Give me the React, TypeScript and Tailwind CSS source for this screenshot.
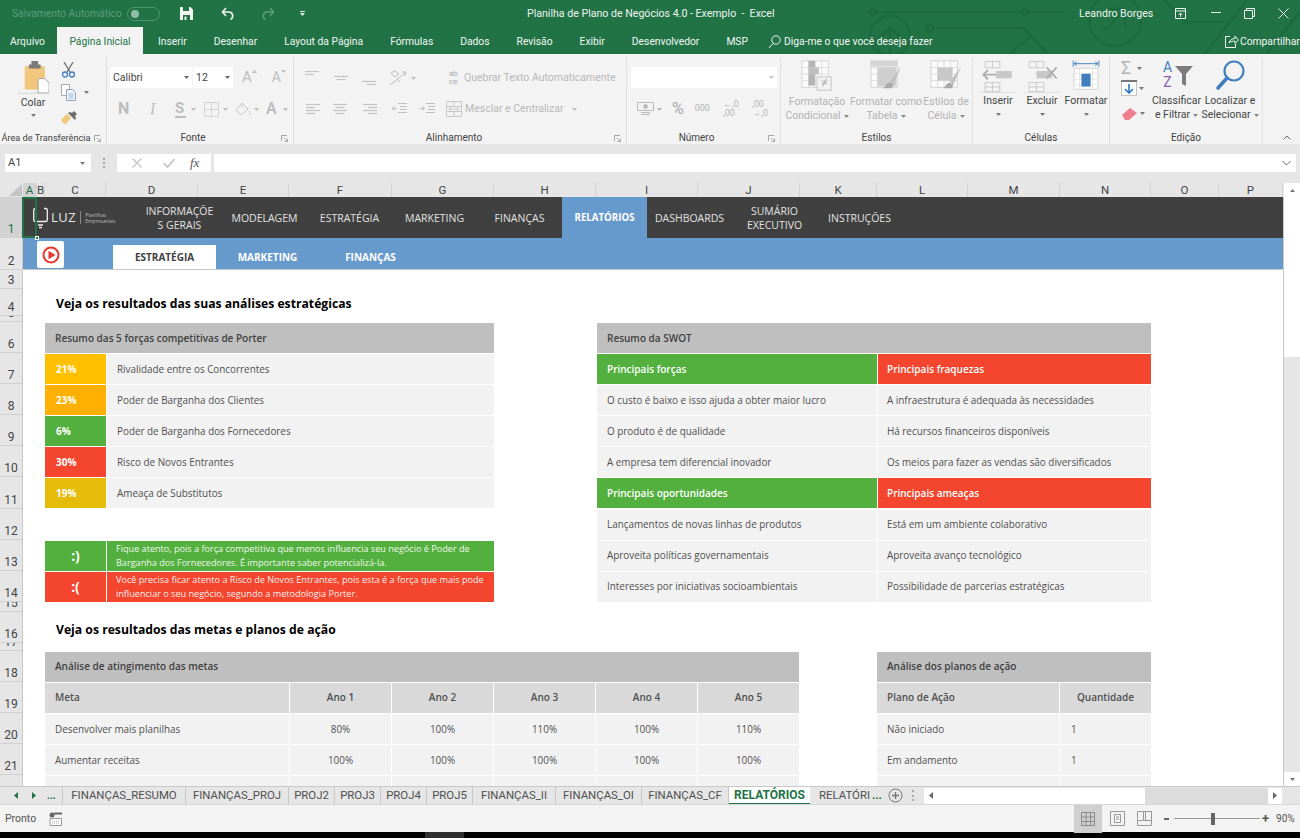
import type { ReactNode } from "react";

const ui = "font-['Roboto',sans-serif]";
const sheetFont = "font-['Open_Sans',sans-serif]";

function Caret({ className = "" }: { className?: string }) {
	return (
		<svg width="5" height="3" viewBox="0 0 5 3" className={`shrink-0 ${className}`}>
			<path d="M0 0h5L2.5 3z" fill="currentColor" />
		</svg>
	);
}

function Lines({ rows, align = "left" }: { rows: number; align?: "left" | "center" | "right" }) {
	const out = [];
	for (let i = 0; i < rows; i++) {
		const w = i % 2 === 0 ? 14 : 9;
		const x = align === "left" ? 0 : align === "center" ? (14 - w) / 2 : 14 - w;
		out.push(<path key={i} d={`M${x} ${1.5 + i * 3}h${w}`} />);
	}
	return (
		<svg width="14" height={rows * 3} stroke="#c4c4c4" strokeWidth="1.2">
			{out}
		</svg>
	);
}

function StyleIcon({ kind }: { kind: "cond" | "table" | "cell" }) {
	return (
		<svg width="34" height="34" viewBox="0 0 36 36">
			<rect x="2" y="2" width="28" height="28" fill="#fbfbfb" stroke="#d2d2d2" />
			<path d="M2 9h28M2 16h28M2 23h28M9 2v28M16 2v28M23 2v28" stroke="#dcdcdc" />
			{kind === "cond" && (
				<g>
					<rect x="9" y="2" width="7" height="7" fill="#b4b4b4" />
					<rect x="9" y="9" width="11" height="7" fill="#c0c0c0" />
					<rect x="9" y="16" width="7" height="12" fill="#b4b4b4" />
					<rect x="18" y="19" width="15" height="14" fill="#f3f3f3" stroke="#c4c4c4" />
					<path d="M23 26h6M23 23.5h6M24 29l4-8" stroke="#a8a8a8" fill="none" />
				</g>
			)}
			{kind === "table" && (
				<g>
					<rect x="2" y="2" width="28" height="6" fill="#d4d4d4" />
					<rect x="9" y="9" width="20" height="20" fill="#cfcfcf" />
				</g>
			)}
			{kind === "cell" && <rect x="9" y="9" width="16" height="14" fill="#c8c8c8" />}
			{kind !== "cond" && (
				<g>
					<path d="M34 8L22 24l4 3z" fill="#c0c0c0" />
					<path d="M21 25c-3 1-3 5-7 6h10l2-4z" fill="#a8a8a8" />
				</g>
			)}
		</svg>
	);
}

function BigLabel({ first, second, muted, width }: { first: string; second: string; muted?: boolean; width: string }) {
	return (
		<div className={`flex flex-col items-center text-[10.5px] leading-[14px] ${width} ${muted ? "text-[#b2b2b2]" : "text-[#444]"}`}>
			<span className="whitespace-nowrap">{first}</span>
			<span className="flex items-center gap-[3px] whitespace-nowrap">
				{second}
				<Caret className="text-[#888]" />
			</span>
		</div>
	);
}

function Group({
	label,
	width,
	children,
	launcher,
	labelClass = "text-[10px]",
}: {
	label: string;
	width: string;
	children: ReactNode;
	launcher?: boolean;
	labelClass?: string;
}) {
	return (
		<div className={`flex h-[87px] shrink-0 flex-col border-r border-[#e1e1e1] ${width}`}>
			<div className="relative h-[74px]">{children}</div>
			<div className={`relative flex h-[13px] items-center justify-center whitespace-nowrap text-[#444] ${labelClass}`}>
				{label}
				{launcher && (
					<svg width="7" height="7" className="absolute right-[5px] top-[4px]" stroke="#a8a8a8" fill="none">
						<path d="M.5 6V.5H6M3 3l3.5 3.5M6.5 3.5v3h-3" />
					</svg>
				)}
			</div>
		</div>
	);
}

function TitleBar() {
	return (
		<div className="flex h-[27px] items-center text-[10.6px]">
			<div className="flex w-[527px] items-center pl-[12px]">
				<span className="w-[112px] whitespace-nowrap text-[10.3px] text-[#5d9c79]">Salvamento Automático</span>
				<div className="ml-[3px] flex h-[14px] w-[33px] items-center rounded-full border border-[#4f9370] pl-[3px]">
					<div className="h-[8px] w-[8px] rounded-full bg-[#8fbda4]" />
				</div>
				<svg width="13" height="13" viewBox="0 0 13 13" className="ml-[20px]">
					<path d="M0 0h10.5L13 2.5V13H0z" fill="#f2f6f3" />
					<path d="M3 0h6v4H3z" fill="#217346" />
					<path d="M3 8h7v5H3z" fill="#217346" />
					<path d="M4.5 9.5h2v3.5h-2z" fill="#f2f6f3" />
				</svg>
				<svg width="14" height="14" viewBox="0 0 14 14" className="ml-[28px]" fill="none" stroke="#f2f6f3" strokeWidth="1.6">
					<path d="M1.5 5h7a4 4 0 0 1 1 7.5M5 1L1.5 5 5 9" />
				</svg>
				<svg width="14" height="14" viewBox="0 0 14 14" className="ml-[26px]" fill="none" stroke="#5d9c79" strokeWidth="1.6">
					<path d="M12.5 5h-7a4 4 0 0 0-1 7.5M9 1l3.5 4L9 9" />
				</svg>
				<svg width="5" height="6" viewBox="0 0 5 6" className="ml-[25px]" fill="#dfeae4">
					<path d="M0 0h5v1H0zM0 2h5L2.5 5z" />
				</svg>
			</div>
			<div className="w-[552px] whitespace-pre text-[#eef4f0]">Planilha de Plano de Negócios 4.0 - Exemplo  -  Excel</div>
			<div className="relative flex items-center text-[#eef4f0]">
				<span className="w-[96px] whitespace-nowrap">Leandro Borges</span>
				<svg width="11" height="11" viewBox="0 0 11 11" fill="none" stroke="#eef4f0">
					<path d="M.5.5h10v10H.5zM.5 3h10M5.5 9V5M3.5 7l2-2 2 2" />
				</svg>
				<svg width="10" height="2" className="ml-[25px]" fill="#eef4f0">
					<path d="M0 0h10v1H0z" />
				</svg>
				<svg width="11" height="11" viewBox="0 0 11 11" className="ml-[23px]" fill="none" stroke="#eef4f0">
					<path d="M.5 2.5h8v8h-8zM2.5 2.5v-2h8v8h-2" />
				</svg>
				<svg width="11" height="11" viewBox="0 0 11 11" className="ml-[23px]" fill="none" stroke="#eef4f0">
					<path d="M.5.5l10 10M10.5.5l-10 10" />
				</svg>
			</div>
		</div>
	);
}

function MenuBar() {
	const tabs = ["Inserir", "Desenhar", "Layout da Página", "Fórmulas", "Dados", "Revisão", "Exibir", "Desenvolvedor", "MSP"];
	return (
		<div className="flex h-[27px] items-center pt-[2px] text-[10.3px] text-[#f2f6f3]">
			<span className="ml-[10px] w-[47px]">Arquivo</span>
			<span className="-mt-[2px] flex h-[27px] w-[86px] items-center justify-center bg-[#f3f3f3] pt-[2px] text-[#217346]">Página Inicial</span>
			<div className="ml-[15px] flex gap-[27px] whitespace-nowrap">
				{tabs.map((tab) => (
					<span key={tab}>{tab}</span>
				))}
			</div>
			<svg width="13" height="14" viewBox="0 0 13 14" className="ml-[20px]" fill="none" stroke="#f2f6f3">
				<circle cx="8" cy="5" r="4.2" />
				<path d="M5 8.5L1 13" />
			</svg>
			<span className="ml-[3px] w-[441px] whitespace-nowrap">Diga-me o que você deseja fazer</span>
			<svg width="14" height="13" viewBox="0 0 14 13" fill="none" stroke="#f2f6f3">
				<path d="M5 1.5H.5v11h10V9M4 8c1-3 3-4.5 6-4.500V1l3.500 4L10 8.500V6C8 6 6 6.500 4 8z" />
			</svg>
			<span className="ml-[1px] whitespace-nowrap">Compartilhar</span>
		</div>
	);
}

function ClipboardGroup() {
	return (
		<Group label="Área de Transferência" width="w-[107px]" launcher labelClass="pr-[14px] text-[9.2px]">
			<div className="flex">
				<div className="ml-[14px] flex w-[38px] flex-col items-center">
					<svg width="31" height="34" viewBox="0 0 37 40" className="mt-[3px]">
						<path d="M8 7h24v28H8z" fill="#f1c77b" />
						<path d="M13 5h3V1h8v4h3v5H13z" fill="#7b7b7b" />
						<path d="M24 22h8l5 5v12H24z" fill="#fff" stroke="#9a9a9a" />
						<path d="M0 39.500h24" stroke="#d0d0d0" />
					</svg>
					<span className="mt-[2px] text-[10.500px] leading-[14px] text-[#444]">Colar</span>
					<Caret className="mt-[4px] text-[#777]" />
				</div>
				<div className="ml-[9px] flex flex-col">
					<svg width="15" height="16" viewBox="0 0 15 16" className="mt-[5px]" fill="none">
						<path d="M3 0l6 10M12 0L6 10" stroke="#6f6f6f" strokeWidth="1.300" />
						<circle cx="4" cy="12.500" r="2.500" stroke="#3f7fbd" strokeWidth="1.300" />
						<circle cx="11" cy="12.500" r="2.500" stroke="#3f7fbd" strokeWidth="1.300" />
					</svg>
					<div className="mt-[6px] flex items-center">
						<svg width="15" height="17" viewBox="0 0 15 17" fill="#fff" stroke="#a9a9a9">
							<path d="M.5.5h8v11h-8z" />
							<path d="M5.500 5.500h6l3 3v8h-9z" fill="#eef3f8" stroke="#8ea6bd" />
							<path d="M7.500 10h5M7.500 12h5M7.500 14h5" stroke="#9dbad6" />
						</svg>
						<Caret className="ml-[8px] text-[#777]" />
					</div>
					<svg width="16" height="14" viewBox="0 0 16 14" className="mt-[10px]">
						<path d="M0 9l6-6 4 4-5 6H3z" fill="#f1c77b" />
						<path d="M7 2l2-1 2 1 2-2 3 3-2 2 1 2-1 2z" fill="#6b6b6b" />
					</svg>
				</div>
			</div>
		</Group>
	);
}

function FontGroup() {
	const muted = "text-[#bdbdbd]";
	return (
		<Group label="Fonte" width="w-[187px]" launcher labelClass="pr-[14px] text-[10px]">
			<div className="ml-[3px] mt-[10px] flex h-[21px] items-center">
				<div className="flex h-[21px] w-[82px] items-center justify-between bg-white pl-[3px] pr-[3px] text-[10.500px] text-[#444]">
					Calibri
					<Caret className="text-[#666]" />
				</div>
				<div className="ml-[1px] flex h-[21px] w-[40px] items-center justify-between bg-white pl-[3px] pr-[3px] text-[10.500px] text-[#444]">
					12
					<Caret className="text-[#666]" />
				</div>
				<span className={`ml-[9px] text-[15px] ${muted}`}>A</span>
				<Caret className={`-mt-[12px] rotate-180 ${muted}`} />
				<span className={`ml-[15px] text-[14px] ${muted}`}>A</span>
				<Caret className={`-mt-[12px] ${muted}`} />
			</div>
			<div className={`ml-[11px] mt-[10px] flex h-[22px] items-center ${muted}`}>
				<span className="w-[12px] text-[16px] font-bold">N</span>
				<span className="ml-[20px] w-[5px] font-['Liberation_Serif',serif] text-[16px] italic">I</span>
				<span className="ml-[20px] w-[11px] border-b-2 border-[#bdbdbd] text-[15px] font-bold leading-[16px]">S</span>
				<Caret className="ml-[5px]" />
				<svg width="15" height="15" className="ml-[8px]" fill="none" stroke="#d4d4d4">
					<path d="M.5.5h14v14H.5zM7.500.5v14M.5 7.500h14" />
				</svg>
				<Caret className="ml-[4px]" />
				<svg width="16" height="15" viewBox="0 0 16 15" className="ml-[7px]" fill="none" stroke="#c8c8c8">
					<path d="M7 1L1 8l5 5 7-6zM7 1v5M14 9c1 2 1.500 3 .5 4" />
				</svg>
				<Caret className="ml-[3px]" />
				<span className="ml-[7px] w-[12px] text-[16px] font-semibold">A</span>
				<Caret className="ml-[5px]" />
			</div>
		</Group>
	);
}

function AlignGroup() {
	const text = "text-[10.500px] text-[#b8b8b8] whitespace-nowrap";
	return (
		<Group label="Alinhamento" width="w-[333px]" launcher labelClass="pr-[12px] text-[10px]">
			<div className="ml-[11px] mt-[13px] flex h-[16px]">
				<div className="self-start">
					<Lines rows={2} />
				</div>
				<div className="ml-[15px] self-center">
					<Lines rows={2} align="center" />
				</div>
				<div className="ml-[14px] self-end">
					<Lines rows={2} align="right" />
				</div>
				<svg width="20" height="16" viewBox="0 0 20 16" className="ml-[13px] self-center" fill="none" stroke="#bcbcbc">
					<path d="M1 15L16 3M13 2l4 0-1 4M2 3l4 4 4-3-4-3zM8 9l3 3" />
				</svg>
				<Caret className="ml-[2px] self-center text-[#bdbdbd]" />
				<div className="ml-[33px] flex w-[12px] flex-col text-[8px] leading-[8px] text-[#a8a8a8]">
					<span>ab</span>
					<span>ce</span>
				</div>
				<span className={`ml-[3px] self-center ${text}`}>Quebrar Texto Automaticamente</span>
			</div>
			<div className="ml-[12px] mt-[14px] flex h-[18px] items-center">
				<Lines rows={4} />
				<div className="ml-[13px]">
					<Lines rows={4} align="center" />
				</div>
				<div className="ml-[16px]">
					<Lines rows={4} align="right" />
				</div>
				<svg width="16" height="12" viewBox="0 0 16 12" className="ml-[14px]" fill="none" stroke="#c0c0c0">
					<path d="M7 .5h9M9 3.500h7M9 6.500h7M7 9.500h9M6 5.500H1M3.500 3L1 5.500 3.500 8" />
				</svg>
				<svg width="16" height="12" viewBox="0 0 16 12" className="ml-[12px]" fill="none" stroke="#c0c0c0">
					<path d="M7 .5h9M9 3.500h7M9 6.500h7M7 9.500h9M0 5.500h5M3 3l2.500 2.500L3 8" />
				</svg>
				<svg width="16" height="16" viewBox="0 0 16 16" className="ml-[11px]" fill="none" stroke="#c8c8c8">
					<path d="M.5.500h15v15H.5zM.5 5.500h15M.5 10.500h15M8 .5v5M8 10.500v5M3 8h10M3 8l2-1.500M3 8l2 1.500M13 8l-2-1.500M13 8l-2 1.500" />
				</svg>
				<span className={`ml-[3px] w-[107px] ${text}`}>Mesclar e Centralizar</span>
				<Caret className="text-[#bdbdbd]" />
			</div>
		</Group>
	);
}

function NumberGroup() {
	return (
		<Group label="Número" width="w-[154px]" launcher labelClass="pr-[14px] text-[10px]">
			<div className="ml-[4px] mt-[10px] flex h-[21px] w-[146px] items-center justify-end bg-white pr-[3px] text-[#c4c4c4]">
				<Caret />
			</div>
			<div className="ml-[10px] mt-[10px] flex h-[22px] items-center text-[#b4b4b4]">
				<svg width="17" height="16" viewBox="0 0 17 16" fill="none" stroke="#bcbcbc">
					<path d="M.5 1.500h16v8H.5z" />
					<circle cx="8.500" cy="5.500" r="2" fill="#bcbcbc" />
					<path d="M4 11.500h9M4 13.500h9" />
				</svg>
				<Caret className="ml-[3px]" />
				<span className="ml-[10px] text-[16px] text-[#a8a8a8]">%</span>
				<span className="ml-[11px] text-[9px]">000</span>
				<div className="ml-[13px] flex w-[20px] flex-col text-[9px] leading-[9px]">
					<span>←,0</span>
					<span>,00</span>
				</div>
				<div className="ml-[9px] flex w-[20px] flex-col text-[9px] leading-[9px]">
					<span>,00</span>
					<span>→,0</span>
				</div>
			</div>
		</Group>
	);
}

function StylesGroup() {
	return (
		<Group label="Estilos" width="w-[192px]">
			<div className="flex pt-[2px]">
				<div className="flex w-[72px] flex-col items-center">
					<StyleIcon kind="cond" />
					<div className="mt-[2px]">
						<BigLabel first="Formatação" second="Condicional" muted width="w-[72px]" />
					</div>
				</div>
				<div className="flex w-[66px] flex-col items-center">
					<StyleIcon kind="table" />
					<div className="mt-[2px]">
						<BigLabel first="Formatar como" second="Tabela" muted width="w-[66px]" />
					</div>
				</div>
				<div className="flex w-[54px] flex-col items-center">
					<StyleIcon kind="cell" />
					<div className="mt-[2px]">
						<BigLabel first="Estilos de" second="Célula" muted width="w-[54px]" />
					</div>
				</div>
			</div>
		</Group>
	);
}

function CellBlocks({ x }: { x?: boolean }) {
	return (
		<svg width="38" height="33" viewBox="0 0 38 36" fill="none">
			<path d="M5 1.500h16v7H5zM13 1.500v7M5 24.500h16v10H5zM5 29.500h16M13 24.500v10" stroke="#c8c8c8" />
			<rect x={x ? 13 : 17} y="12" width="17" height="8" fill="#c8c8c8" />
			{x ? (
				<path d="M24 8l11 12M35 8L24 20" stroke="#aeaeae" strokeWidth="2" />
			) : (
				<path d="M17 16H3M8 11l-5 5 5 5" stroke="#aeaeae" strokeWidth="2" />
			)}
			<path d="M0 35.500h38" stroke="#dedede" />
		</svg>
	);
}

function CellsGroup() {
	return (
		<Group label="Células" width="w-[137px]">
			<div className="flex pt-[3px]">
				<div className="ml-[5px] flex w-[40px] flex-col items-center text-[10.500px] text-[#444]">
					<CellBlocks />
					<span className="mt-[1px] leading-[14px]">Inserir</span>
					<Caret className="mt-[5px] text-[#777]" />
				</div>
				<div className="ml-[3px] flex w-[42px] flex-col items-center text-[10.500px] text-[#444]">
					<CellBlocks x />
					<span className="mt-[1px] leading-[14px]">Excluir</span>
					<Caret className="mt-[5px] text-[#777]" />
				</div>
				<div className="ml-[1px] flex w-[44px] flex-col items-center text-[10.500px] text-[#444]">
					<svg width="30" height="33" viewBox="0 0 30 36" fill="none">
						<path d="M2 4h26M2 4l3-2M2 4l3 2M28 4l-3-2M28 4l-3 2M1 .5v7M29 .5v7" stroke="#3f7fbd" />
						<path d="M2 9h26v23H2z" fill="#fff" stroke="#d0d0d0" />
						<path d="M2 15h26M2 21h26M2 27h26M8 9v23M22 9v23" stroke="#e2e2e2" />
						<rect x="10" y="15" width="10" height="14" fill="#3f7fbd" />
					</svg>
					<span className="mt-[1px] leading-[14px]">Formatar</span>
					<Caret className="mt-[5px] text-[#777]" />
				</div>
			</div>
		</Group>
	);
}

function EditGroup() {
	return (
		<Group label="Edição" width="w-[153px]">
			<div className="flex pt-[3px]">
				<div className="-mt-[2px] ml-[11px] flex w-[28px] flex-col">
					<div className="flex h-[20px] items-center">
						<span className="text-[18px] leading-[18px] text-[#b6b6b6]">Σ</span>
						<Caret className="ml-[6px] text-[#777]" />
					</div>
					<div className="flex h-[20px] items-center">
						<svg width="16" height="16" viewBox="0 0 16 16">
							<rect x=".5" y=".5" width="15" height="15" fill="#fff" stroke="#c4c4c4" />
							<path d="M0 0h16v2H0z" fill="#777" />
							<path d="M8 4v9M4 9l4 4 4-4" stroke="#2b79c2" strokeWidth="1.600" fill="none" />
						</svg>
						<Caret className="ml-[2px] text-[#777]" />
					</div>
					<div className="mt-[7px] flex h-[16px] items-center">
						<svg width="17" height="13" viewBox="0 0 17 13">
							<path d="M1 8l8-7 7 5-8 7H4z" fill="#ee7f8f" />
						</svg>
						<Caret className="ml-[2px] text-[#777]" />
					</div>
				</div>
				<div className="flex w-[55px] flex-col items-center">
					<div className="flex h-[31px] items-start">
						<div className="flex w-[14px] flex-col items-center text-[14px] leading-[15px]">
							<span className="text-[#3f7fbd]">A</span>
							<span className="text-[#8a5cb0]">Z</span>
						</div>
						<svg width="18" height="22" viewBox="0 0 18 22" className="mt-[6px]">
							<path d="M0 0h18l-7 8v12l-4-2V8z" fill="#7c7c7c" />
						</svg>
					</div>
					<div className="mt-[3px]">
						<BigLabel first="Classificar" second="e Filtrar" width="w-[55px]" />
					</div>
				</div>
				<div className="flex w-[52px] flex-col items-center">
					<svg width="30" height="31" viewBox="0 0 30 31" fill="none" stroke="#3f7fbd">
						<circle cx="19" cy="11" r="9.500" strokeWidth="2.200" />
						<path d="M12 18L3 28" strokeWidth="3.600" strokeLinecap="round" />
					</svg>
					<div className="mt-[3px]">
						<BigLabel first="Localizar e" second="Selecionar" width="w-[52px]" />
					</div>
				</div>
			</div>
		</Group>
	);
}

function Ribbon() {
	return (
		<div className={`flex h-[90px] bg-[#f3f3f3] pt-[3px] ${ui}`}>
			<ClipboardGroup />
			<FontGroup />
			<AlignGroup />
			<NumberGroup />
			<StylesGroup />
			<CellsGroup />
			<EditGroup />
			<div className="flex flex-1 items-end justify-end pb-[4px] pr-[9px]">
				<svg width="8" height="5" fill="none" stroke="#666">
					<path d="M.5 4.500L4 1l3.500 3.500" />
				</svg>
			</div>
		</div>
	);
}

function FormulaBar() {
	return (
		<div className={`flex h-[39px] items-start bg-[#e6e6e6] pl-[5px] pt-[10px] ${ui}`}>
			<div className="flex h-[18px] w-[86px] items-center justify-between bg-white pl-[3px] pr-[6px] text-[11px] text-[#444]">
				A1
				<Caret className="text-[#777]" />
			</div>
			<div className="ml-[12px] flex h-[18px] w-[4px] flex-col justify-center gap-[2px]">
				<div className="h-[2px] w-[2px] bg-[#a8a8a8]" />
				<div className="h-[2px] w-[2px] bg-[#a8a8a8]" />
				<div className="h-[2px] w-[2px] bg-[#a8a8a8]" />
			</div>
			<div className="ml-[10px] flex h-[18px] w-[94px] items-center bg-white pl-[15px]">
				<svg width="10" height="10" fill="none" stroke="#c4c4c4" strokeWidth="1.300">
					<path d="M.5.500l9 9M9.500.500l-9 9" />
				</svg>
				<svg width="12" height="10" className="ml-[21px]" fill="none" stroke="#c4c4c4" strokeWidth="1.600">
					<path d="M.5 5l4 4L11.500 1" />
				</svg>
				<span className="ml-[15px] font-['Liberation_Serif',serif] text-[13px] italic text-[#555]">fx</span>
			</div>
			<div className="ml-[3px] flex h-[18px] flex-1 items-center justify-end bg-white pr-[5px]">
				<svg width="9" height="6" fill="none" stroke="#666">
					<path d="M.5 1L4.500 5l4-4" />
				</svg>
			</div>
			<div className="w-[4px]" />
		</div>
	);
}

const columns: [string, string][] = [
	["A", "w-[14px]"],
	["B", "w-[8px]"],
	["C", "w-[61px]"],
	["D", "w-[92px]"],
	["E", "w-[91px]"],
	["F", "w-[103px]"],
	["G", "w-[102px]"],
	["H", "w-[102px]"],
	["I", "w-[102px]"],
	["J", "w-[102px]"],
	["K", "w-[77px]"],
	["L", "w-[91px]"],
	["M", "w-[92px]"],
	["N", "w-[91px]"],
	["O", "w-[68px]"],
	["P", "w-[64px]"],
];

function ColumnHeaders() {
	return (
		<div className={`flex h-[14px] bg-[#e6e6e6] text-[11.5px] leading-[14px] text-[#444] ${ui}`}>
			<div className="flex h-[14px] w-[23px] items-end justify-end pb-[1px] pr-[1px]">
				<svg width="13" height="12" fill="#c4c4c4">
					<path d="M13 0v12H0z" />
				</svg>
			</div>
			{columns.map(([name, width]) => (
				<div
					key={name}
					className={`h-[14px] border-r border-[#d4d4d4] text-center ${width} ${name === "A" ? "bg-[#d2d2d2] text-[#217346]" : ""}`}
				>
					{name}
				</div>
			))}
			<div className="ml-px flex h-[14px] w-[16px] items-center justify-center bg-white text-[#777]">
				<Caret className="rotate-180" />
			</div>
		</div>
	);
}

const rowHeaders: [string, string][] = [
	["1", "h-[41px]"],
	["2", "h-[32px]"],
	["3", "h-[19px]"],
	["4", "h-[27px]"],
	["5", "h-[6px]"],
	["6", "h-[31px]"],
	["7", "h-[31px]"],
	["8", "h-[31px]"],
	["9", "h-[31px]"],
	["10", "h-[31px]"],
	["11", "h-[32px]"],
	["12", "h-[31px]"],
	["13", "h-[31px]"],
	["14", "h-[31px]"],
	["15", "h-[10px]"],
	["16", "h-[31px]"],
	["17", "h-[8px]"],
	["18", "h-[31px]"],
	["19", "h-[31px]"],
	["20", "h-[31px]"],
	["21", "h-[31px]"],
	["22", "h-[31px]"],
];

function RowHeaders() {
	return (
		<div className={`w-[23px] shrink-0 overflow-hidden border-r border-[#c8c8c8] bg-[#e6e6e6] text-[12px] text-[#444] ${ui}`}>
			{rowHeaders.map(([label, height]) => (
				<div
					key={label}
					className={`flex items-end justify-center overflow-hidden border-b border-[#d0d0d0] leading-[15px] ${height} ${label === "1" ? "bg-[#d2d2d2] text-[#217346]" : ""}`}
				>
					<span className="shrink-0">{label}</span>
				</div>
			))}
		</div>
	);
}

function Logo() {
	return (
		<div className="ml-[10px] flex w-[104px] items-center text-[#e8e8e8]">
			<svg width="15" height="22" viewBox="0 0 15 22" fill="none" stroke="#f0f0f0" strokeWidth="1.300">
				<path d="M4 1.500H2A1.500 1.500 0 0 0 .7 3v10A1.500 1.500 0 0 0 2 14.500h11A1.500 1.500 0 0 0 14.300 13V3A1.500 1.500 0 0 0 13 1.500h-2" />
				<path d="M5 18h5M6 20.500h3" />
			</svg>
			<span className="ml-[3px] text-[13px] font-medium tracking-[0.5px]">LUZ</span>
			<div className="mx-[4px] h-[13px] w-px bg-[#8a8a8a]" />
			<div className="flex flex-col text-[5px] leading-[6px] text-[#b8b8b8]">
				<span>Planilhas</span>
				<span>Empresariais</span>
			</div>
		</div>
	);
}

function TopNav() {
	const items = [
		["INFORMAÇÕE", "S GERAIS"],
		["MODELAGEM"],
		["ESTRATÉGIA"],
		["MARKETING"],
		["FINANÇAS"],
		["RELATÓRIOS"],
		["DASHBOARDS"],
		["SUMÁRIO", "EXECUTIVO"],
		["INSTRUÇÕES"],
	];
	return (
		<div className="flex h-[41px] shrink-0 bg-[#404040]">
			<Logo />
			{items.map((lines) => {
				const active = lines[0] === "RELATÓRIOS";
				return (
					<div
						key={lines[0]}
						className={`flex w-[85px] flex-col items-center justify-center leading-[14px] ${active ? "bg-[#6699cc] text-[9.700px] font-bold text-white" : "text-[10.500px] text-[#e2e2e2]"}`}
					>
						{lines.map((line) => (
							<span key={line}>{line}</span>
						))}
					</div>
				);
			})}
		</div>
	);
}

function SubNav() {
	return (
		<div className="flex h-[32px] shrink-0 border-b border-[#c8c8c8] bg-[#6699cc]">
			<div className="ml-[14px] mt-[3px] flex h-[27px] w-[27px] items-center justify-center rounded-[2px] bg-white">
				<svg width="18" height="18" viewBox="0 0 18 18">
					<circle cx="9" cy="9" r="7.500" fill="none" stroke="#e8372c" strokeWidth="2" />
					<path d="M6.500 4.800L13.500 9l-7 4.200z" fill="#e8372c" />
				</svg>
			</div>
			<div className="ml-[49px] flex h-full items-end text-[10px] font-bold">
				<div className="flex h-[24px] w-[103px] items-center justify-center bg-white text-[#404040]">ESTRATÉGIA</div>
				<div className="flex h-[24px] w-[103px] items-center justify-center text-white">MARKETING</div>
				<div className="flex h-[24px] w-[103px] items-center justify-center text-white">FINANÇAS</div>
			</div>
		</div>
	);
}

const tableHead = "flex h-[30px] items-center bg-[#bfbfbf] pl-[10px] text-[10px] font-semibold text-[#404040]";
const tableCell = "flex h-[30px] items-center bg-[#f2f2f2] text-[9.900px] text-[#505050]";
const subHead = "flex h-[30px] items-center bg-[#d9d9d9] text-[10px] font-semibold text-[#505050]";

const forces: [string, string, string][] = [
	["21%", "Rivalidade entre os Concorrentes", "bg-[#ffc000]"],
	["23%", "Poder de Barganha dos Clientes", "bg-[#ffb000]"],
	["6%", "Poder de Barganha dos Fornecedores", "bg-[#53b03e]"],
	["30%", "Risco de Novos Entrantes", "bg-[#f4462e]"],
	["19%", "Ameaça de Substitutos", "bg-[#e6bc0a]"],
];

function PorterTable() {
	return (
		<div className="grid w-[449px] shrink-0 grid-cols-[61px_387px] gap-x-px gap-y-[1.1px]">
			<div className={`col-span-2 ${tableHead}`}>Resumo das 5 forças competitivas de Porter</div>
			{forces.map(([pct, label, color]) => (
				<div key={label} className="contents">
					<div className={`flex h-[30px] items-center pl-[11px] text-[10px] font-bold text-white ${color}`}>{pct}</div>
					<div className={`${tableCell} pl-[10px]`}>{label}</div>
				</div>
			))}
			<div className="col-span-2 h-[30px]" />
			<div className="flex h-[30px] items-center justify-center bg-[#53b03e] text-[14px] font-bold text-white">:)</div>
			<div className="flex h-[30px] items-center bg-[#53b03e] pl-[9px] text-[9.100px] leading-[14px] text-[#eef7ea]">
				<span>
					Fique atento, pois a força competitiva que menos influencia seu negócio é Poder de
					<br />
					Barganha dos Fornecedores. É importante saber potencializá-la.
				</span>
			</div>
			<div className="flex h-[30px] items-center justify-center bg-[#f4462e] text-[14px] font-bold text-white">:(</div>
			<div className="flex h-[30px] items-center bg-[#f4462e] pl-[9px] text-[9.100px] leading-[14px] text-[#fdecea]">
				<span>
					Você precisa ficar atento a Risco de Novos Entrantes, pois esta é a força que mais pode
					<br />
					influenciar o seu negócio, segundo a metodologia Porter.
				</span>
			</div>
		</div>
	);
}

const swotRows: [string, string, boolean][] = [
	["Principais forças", "Principais fraquezas", true],
	["O custo é baixo e isso ajuda a obter maior lucro", "A infraestrutura é adequada às necessidades", false],
	["O produto é de qualidade", "Há recursos financeiros disponíveis", false],
	["A empresa tem diferencial inovador", "Os meios para fazer as vendas são diversificados", false],
	["Principais oportunidades", "Principais ameaças", true],
	["Lançamentos de novas linhas de produtos", "Está em um ambiente colaborativo", false],
	["Aproveita políticas governamentais", "Aproveita avanço tecnológico", false],
	["Interesses por iniciativas socioambientais", "Possibilidade de parcerias estratégicas", false],
];

function SwotTable() {
	return (
		<div className="ml-[103px] grid w-[554px] shrink-0 grid-cols-[280px_273px] gap-x-px gap-y-[1.1px]">
			<div className={`col-span-2 ${tableHead}`}>Resumo da SWOT</div>
			{swotRows.map(([left, right, head]) =>
				head ? (
					<div key={left} className="contents">
						<div className="flex h-[30px] items-center bg-[#53b03e] pl-[10px] text-[10px] font-semibold text-white">{left}</div>
						<div className="flex h-[30px] items-center bg-[#f4462e] pl-[9px] text-[10px] font-semibold text-white">{right}</div>
					</div>
				) : (
					<div key={left} className="contents">
						<div className={`${tableCell} pl-[10px]`}>{left}</div>
						<div className={`${tableCell} pl-[9px]`}>{right}</div>
					</div>
				),
			)}
		</div>
	);
}

const goals: string[][] = [
	["Desenvolver mais planilhas", "80%", "100%", "110%", "100%", "110%"],
	["Aumentar receitas", "100%", "100%", "100%", "100%", "100%"],
	["", "", "", "", "", ""],
];

function GoalsTable() {
	return (
		<div className="grid w-[755px] shrink-0 grid-cols-[244px_repeat(5,101px)] gap-x-px gap-y-[1.1px]">
			<div className={`col-span-6 ${tableHead}`}>Análise de atingimento das metas</div>
			<div className={`${subHead} pl-[10px]`}>Meta</div>
			{["Ano 1", "Ano 2", "Ano 3", "Ano 4", "Ano 5"].map((year) => (
				<div key={year} className={`${subHead} justify-center`}>
					{year}
				</div>
			))}
			{goals.map((row, i) =>
				row.map((value, j) => (
					<div key={`${i}-${j}`} className={`${tableCell} ${j === 0 ? "pl-[10px]" : "justify-center"}`}>
						{value}
					</div>
				)),
			)}
		</div>
	);
}

function PlansTable() {
	const plans = [
		["Não iniciado", "1"],
		["Em andamento", "1"],
		["", ""],
	];
	return (
		<div className="ml-[77px] grid w-[274px] shrink-0 grid-cols-[182px_91px] gap-x-px gap-y-[1.1px]">
			<div className={`col-span-2 ${tableHead}`}>Análise dos planos de ação</div>
			<div className={`${subHead} pl-[10px]`}>Plano de Ação</div>
			<div className={`${subHead} justify-center`}>Quantidade</div>
			{plans.map(([name, qty], i) => (
				<div key={i} className="contents">
					<div className={`${tableCell} pl-[10px]`}>{name}</div>
					<div className={`${tableCell} pl-[11px]`}>{qty}</div>
				</div>
			))}
		</div>
	);
}

function Scrollbar() {
	return (
		<div className="flex w-[17px] shrink-0 flex-col border-l border-[#c8c8c8] bg-[#e6e6e6]">
			<div className="h-[160px] bg-white" />
			<div className="flex-1" />
			<div className="flex h-[14px] items-center justify-center bg-white text-[#777]">
				<Caret />
			</div>
		</div>
	);
}

function Sheet() {
	return (
		<div className={`relative flex h-[589px] overflow-hidden bg-white ${sheetFont}`}>
			<RowHeaders />
			<div className="flex min-w-0 flex-1 flex-col overflow-hidden">
				<TopNav />
				<SubNav />
				<div className="flex h-[53px] shrink-0 items-end pb-[10px] pl-[33px] text-[12.200px] font-bold text-black">
					Veja os resultados das suas análises estratégicas
				</div>
				<div className="flex shrink-0 pl-[22px]">
					<PorterTable />
					<SwotTable />
				</div>
				<div className="flex h-[50px] shrink-0 items-end pb-[12px] pl-[33px] text-[12.200px] font-bold text-black">
					Veja os resultados das metas e planos de ação
				</div>
				<div className="flex shrink-0 pl-[22px]">
					<GoalsTable />
					<PlansTable />
				</div>
			</div>
			<Scrollbar />
			<div className="absolute left-[22px] top-0 h-[41px] w-[15px] border-2 border-[#217346]" />
			<div className="absolute left-[35px] top-[39px] h-[4px] w-[4px] border border-white bg-[#217346]" />
		</div>
	);
}

function SheetTabs() {
	const tabs: [string, string][] = [
		["FINANÇAS_RESUMO", "w-[123px]"],
		["FINANÇAS_PROJ", "w-[103px]"],
		["PROJ2", "w-[46px]"],
		["PROJ3", "w-[46px]"],
		["PROJ4", "w-[46px]"],
		["PROJ5", "w-[46px]"],
		["FINANÇAS_II", "w-[83px]"],
		["FINANÇAS_OI", "w-[86px]"],
		["FINANÇAS_CF", "w-[87px]"],
	];
	return (
		<div className={`flex h-[18px] items-center border-t border-[#c8c8c8] bg-[#e6e6e6] text-[11.4px] text-[#505050] ${ui}`}>
			<div className="flex h-[17px] w-[63px] shrink-0 items-center border-r border-[#c8c8c8] pl-[14px] text-[#217346]">
				<svg width="4" height="7" fill="currentColor">
					<path d="M4 0v7L0 3.500z" />
				</svg>
				<svg width="4" height="7" className="ml-[14px]" fill="currentColor">
					<path d="M0 0v7l4-3.500z" />
				</svg>
				<span className="ml-[11px] text-[10px] font-bold leading-[14px]">...</span>
			</div>
			{tabs.map(([tab, width]) => (
				<div key={tab} className={`flex h-[17px] shrink-0 items-center justify-center whitespace-nowrap border-r border-[#c8c8c8] ${width}`}>
					{tab}
				</div>
			))}
			<div className="flex h-[18px] w-[81px] shrink-0 items-center justify-center border-b-2 border-[#217346] bg-white text-[12px] font-bold text-[#217346]">
				RELATÓRIOS
			</div>
			<span className="ml-[9px] w-[49px] shrink-0 whitespace-nowrap">RELATÓRI</span>
			<span className="ml-[4px] w-[9px] shrink-0 font-bold text-[#217346]">...</span>
			<svg width="15" height="15" viewBox="0 0 15 15" className="ml-[7px] shrink-0" fill="none" stroke="#777">
				<circle cx="7.500" cy="7.500" r="6.500" />
				<path d="M7.500 4v7M4 7.500h7" strokeWidth="1.400" />
			</svg>
			<div className="ml-[9px] flex h-[13px] w-[3px] shrink-0 flex-col justify-between py-[1px]">
				<div className="h-[2px] w-[2px] bg-[#aaa]" />
				<div className="h-[2px] w-[2px] bg-[#aaa]" />
				<div className="h-[2px] w-[2px] bg-[#aaa]" />
			</div>
			<div className="ml-[9px] flex h-[16px] w-[14px] shrink-0 items-center justify-center bg-white">
				<svg width="4" height="7" fill="#666">
					<path d="M4 0v7L0 3.500z" />
				</svg>
			</div>
			<div className="h-[16px] w-[207px] shrink-0 bg-white" />
			<div className="h-[16px] w-[123px] shrink-0 bg-[#dcdcdc]" />
			<div className="flex h-[16px] w-[14px] shrink-0 items-center justify-center bg-white">
				<svg width="4" height="7" fill="#666">
					<path d="M0 0v7l4-3.500z" />
				</svg>
			</div>
		</div>
	);
}

function StatusBar() {
	return (
		<div className={`flex h-[28px] items-center border-t border-[#d8d8d8] bg-[#f3f3f3] text-[10.500px] text-[#555] ${ui}`}>
			<span className="ml-[5px] w-[44px]">Pronto</span>
			<svg width="13" height="14" viewBox="0 0 13 14" fill="none">
				<circle cx="3" cy="3" r="2.500" fill="#666" />
				<path d="M5 1.500h8" stroke="#666" strokeWidth="2" />
				<path d="M1 6.500h11.500v7H1z" stroke="#999" fill="#fff" />
				<path d="M3 9h8M3 11h8" stroke="#aaa" strokeDasharray="1 1" />
			</svg>
			<div className="ml-[1012px] flex h-[28px] w-[28px] items-center justify-center bg-[#d0d0d0]">
				<svg width="14" height="14" fill="none" stroke="#8a8a8a">
					<path d="M.5.500h13v13H.5zM.5 5h13M.5 9.500h13M5 .5v13M9.500.5v13" />
				</svg>
			</div>
			<svg width="15" height="15" className="ml-[8px]" fill="none" stroke="#9a9a9a">
				<path d="M.5.500h14v14H.5zM4.500 3.500h6v8h-6zM6 6h3M6 8h3" />
			</svg>
			<svg width="15" height="15" className="ml-[12px]" fill="none" stroke="#9a9a9a">
				<path d="M.5.500h14v14H.5zM.5 9.500h6v-9M6.500 9.500h8M8.500.5v9" />
			</svg>
			<div className="ml-[12px] h-[2px] w-[5px] bg-[#666]" />
			<div className="ml-[5px] flex w-[86px] items-center">
				<div className="h-px w-[37px] bg-[#999]" />
				<div className="h-[12px] w-[4px] bg-[#666]" />
				<div className="h-px flex-1 bg-[#999]" />
			</div>
			<span className="ml-[2px] text-[13px] font-bold leading-[12px] text-[#555]">+</span>
			<span className="ml-[7px] text-[10px]">90%</span>
		</div>
	);
}

export default function App() {
	return (
		<div className="flex h-[838px] w-[1300px] flex-col overflow-hidden bg-black">
			<div className={`relative h-[54px] shrink-0 bg-[#217346] ${ui}`}>
				<svg width="1300" height="54" viewBox="0 0 1300 54" className="absolute inset-0" fill="none" stroke="#1c6a3d" strokeWidth="2.500">
					<circle cx="873" cy="12" r="3" />
					<path d="M876 12h146" />
					<circle cx="1025" cy="12" r="3" />
					<path d="M1028 12h36" />
					<circle cx="1115" cy="20" r="26" />
					<path d="M1103 32l22-23M1107 9h18v18" />
					<circle cx="890" cy="36" r="20" />
					<path d="M890 28v26M880 38l10-10 10 10" />
					<circle cx="930" cy="28" r="3" />
					<path d="M933 28h90l25 26M1010 54l20-18" />
					<path d="M1205 54l42-54M1266 54l34-42M1165 0l20 22h40" />
				</svg>
				<div className="relative">
					<TitleBar />
					<MenuBar />
				</div>
			</div>
			<Ribbon />
			<FormulaBar />
			<ColumnHeaders />
			<Sheet />
			<SheetTabs />
			<StatusBar />
			<div className="ml-[425px] h-[6px] w-[39px] shrink-0 bg-[#2e2e2e]" />
		</div>
	);
}
